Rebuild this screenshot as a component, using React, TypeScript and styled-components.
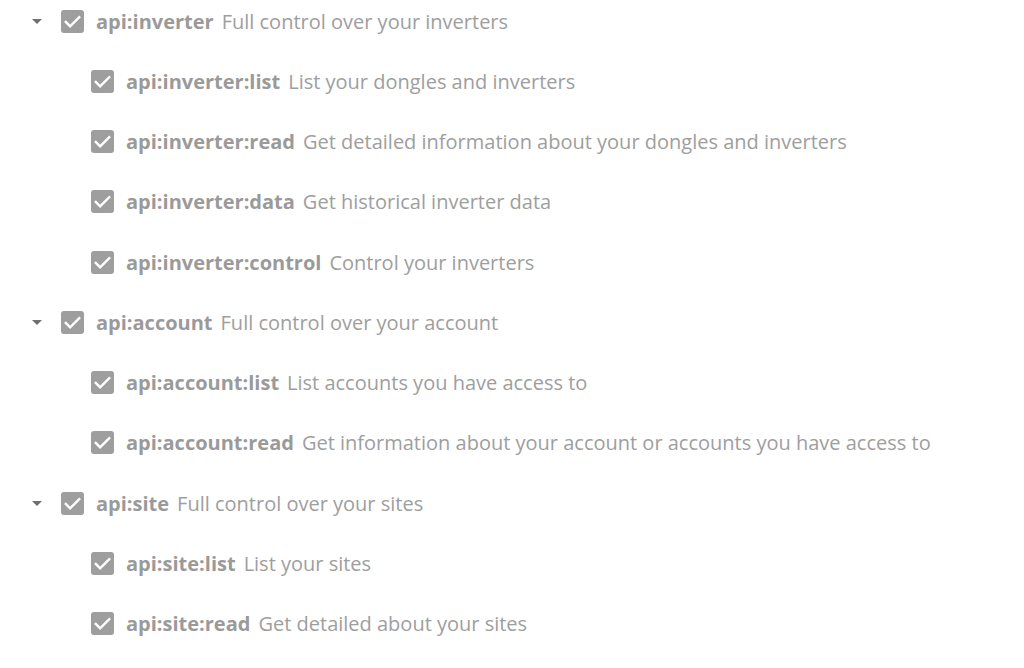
import React from "react";
import styled, { createGlobalStyle } from "styled-components";

const Global = createGlobalStyle`
  html, body { margin: 0; padding: 0; background: #ffffff; }
  body { font-family: "Open Sans", "Liberation Sans", sans-serif; }
`;

const List = styled.div`
  display: flex;
  flex-direction: column;
  gap: 18.25px;
  padding-left: 32px;
`;

const Row = styled.div<{ $child?: boolean }>`
  display: flex;
  align-items: center;
  height: 42px;
  padding-left: ${(p) => (p.$child ? 59 : 0)}px;
`;

const Caret = styled.span`
  width: 0;
  height: 0;
  border-left: 5px solid transparent;
  border-right: 5px solid transparent;
  border-top: 5px solid #6f6f6f;
  margin-right: 19px;
`;

const Box = styled.span`
  width: 23px;
  height: 23px;
  border-radius: 3px;
  background: #9e9e9e;
  display: flex;
  align-items: center;
  justify-content: center;
  flex-shrink: 0;
  margin-right: 12px;
`;

const Name = styled.span`
  font-weight: 700;
  font-size: 20px;
  color: #9a9a9a;
  margin-right: 8px;
  white-space: nowrap;
`;

const Desc = styled.span`
  font-size: 20px;
  color: #9e9e9e;
  white-space: nowrap;
`;

const Check = () => (
  <svg width="19" height="19" viewBox="0 0 24 24">
    <path d="M3.5 12.5l5.5 5.5L20.5 6.5" fill="none" stroke="#fff" strokeWidth="3" strokeLinecap="square" />
  </svg>
);

type Item = { name: string; desc: string; child?: boolean };

const items: Item[] = [
  { name: "api:inverter", desc: "Full control over your inverters" },
  { name: "api:inverter:list", desc: "List your dongles and inverters", child: true },
  { name: "api:inverter:read", desc: "Get detailed information about your dongles and inverters", child: true },
  { name: "api:inverter:data", desc: "Get historical inverter data", child: true },
  { name: "api:inverter:control", desc: "Control your inverters", child: true },
  { name: "api:account", desc: "Full control over your account" },
  { name: "api:account:list", desc: "List accounts you have access to", child: true },
  { name: "api:account:read", desc: "Get information about your account or accounts you have access to", child: true },
  { name: "api:site", desc: "Full control over your sites" },
  { name: "api:site:list", desc: "List your sites", child: true },
  { name: "api:site:read", desc: "Get detailed about your sites", child: true },
];

export default function App() {
  return (
    <>
      <Global />
      <List>
        {items.map((it) => (
          <Row key={it.name} $child={it.child}>
            {!it.child && <Caret />}
            <Box>
              <Check />
            </Box>
            <Name>{it.name}</Name>
            <Desc>{it.desc}</Desc>
          </Row>
        ))}
      </List>
    </>
  );
}
